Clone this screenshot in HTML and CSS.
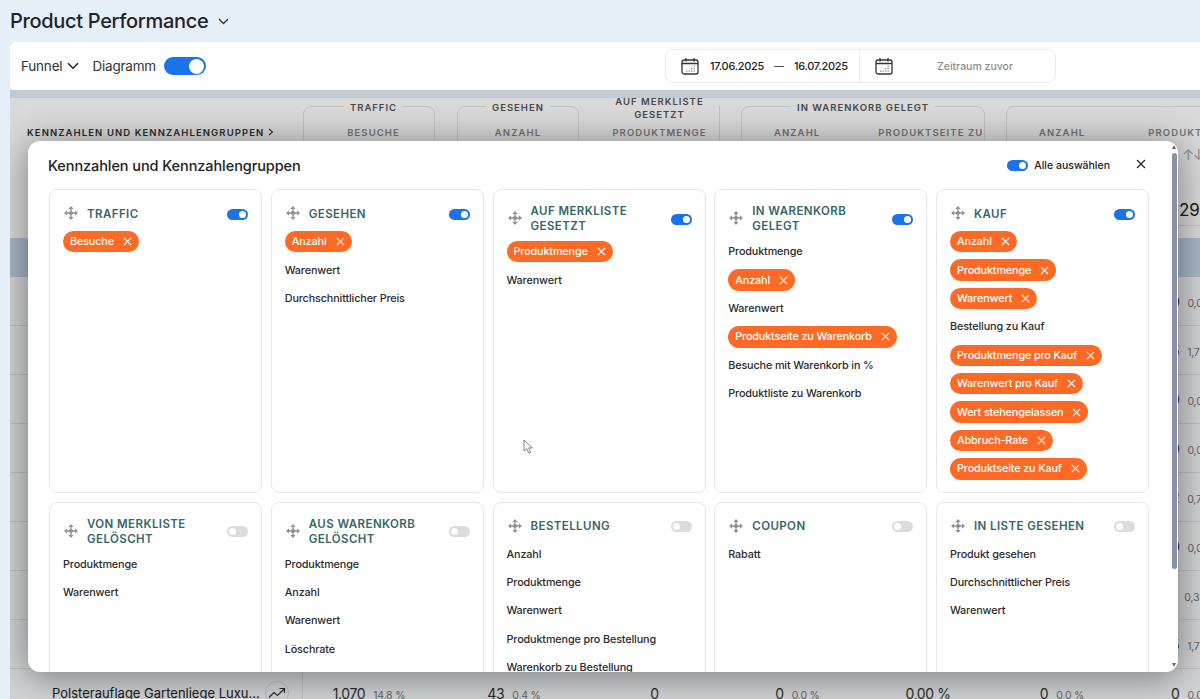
FILE: index.html
```html
<!DOCTYPE html>
<html lang="de">
<head>
  <meta charset="UTF-8">
  <meta name="viewport" content="width=device-width, initial-scale=1.0">
  <title>Product Performance</title>
  <link rel="stylesheet" href="styles.css">
</head>
<body>

  <svg class="icon-defs" width="0" height="0">
    <symbol id="i-move" viewBox="0 0 14 14">
      <path d="M7 2v10M2 7h10" fill="none" stroke="currentColor" stroke-width="1.300"/>
      <path d="M7 0l2.600 3H4.400zM7 14l2.600-3H4.400zM0 7l3-2.600v5.200zM14 7l-3-2.600v5.200z" fill="currentColor"/>
      <circle cx="7" cy="7" r="2" fill="currentColor"/>
    </symbol>
    <symbol id="i-x" viewBox="0 0 10 10">
      <path d="M1 1l8 8M9 1l-8 8" fill="none" stroke="currentColor" stroke-width="1.200"/>
    </symbol>
    <symbol id="i-calendar" viewBox="0 0 18 18">
      <rect x="1" y="3" width="16" height="14" rx="2" fill="none" stroke="currentColor" stroke-width="1.300"/>
      <path d="M1 6.500h16M5 1v3.500M13 1v3.500" fill="none" stroke="currentColor" stroke-width="1.300"/>
      <path d="M5 13.500h1.300v1.300H5zM7.500 13.500h1.300v1.300H7.500zM10 13.500h1.300v1.300H10zM12.500 13.500h1.300v1.300h-1.300zM10 11h1.300v1.300H10zM12.500 11h1.300v1.300h-1.300zM12.500 8.800h1.300v1.300h-1.300z" fill="#8b8b8b"/>
    </symbol>
  </svg>

  <!-- Page title -->
  <header class="page-head">
    <h1>Product Performance</h1>
    <svg class="title-chevron" width="11" height="7" viewBox="0 0 11 7"><path d="M1 1l4.500 4.500L10 1" fill="none" stroke="#333" stroke-width="1.300"/></svg>
  </header>

  <!-- Toolbar -->
  <div class="toolbar">
    <span class="toolbar-label">Funnel</span>
    <svg class="funnel-chevron" width="12" height="8" viewBox="0 0 12 8"><path d="M1 1.300l5 5 5-5" fill="none" stroke="#222" stroke-width="1.500"/></svg>
    <span class="toolbar-label diagram-label">Diagramm</span>
    <span class="toggle toggle-big"></span>

    <div class="date-box">
      <div class="date-part date-current">
        <svg class="calendar" width="18" height="18"><use href="#i-calendar"/></svg>
        <span class="date-value">17.06.2025</span>
        <span class="date-dash">—</span>
        <span class="date-value">16.07.2025</span>
      </div>
      <div class="date-part date-previous">
        <svg class="calendar" width="18" height="18"><use href="#i-calendar"/></svg>
        <span class="date-placeholder">Zeitraum zuvor</span>
      </div>
    </div>
  </div>

  <!-- Report table, dimmed behind the dialog -->
  <main class="report">
    <div class="report-strip"></div>

    <div class="report-head">
      <div class="head-name">KENNZAHLEN UND KENNZAHLENGRUPPEN
        <svg width="6" height="8" viewBox="0 0 6 8"><path d="M1 .8L4.500 4 1 7.200" fill="none" stroke="#333" stroke-width="1.100"/></svg>
      </div>
      <div class="group group-traffic">
        <div class="group-title"><span>TRAFFIC</span></div>
        <div class="group-cols"><span>BESUCHE</span></div>
      </div>
      <div class="group group-seen">
        <div class="group-title"><span>GESEHEN</span></div>
        <div class="group-cols"><span>ANZAHL</span></div>
      </div>
      <div class="group group-wish">
        <div class="group-title">AUF MERKLISTE<br>GESETZT</div>
        <div class="group-cols"><span>PRODUKTMENGE</span></div>
      </div>
      <div class="group group-cart">
        <div class="group-title"><span>IN WARENKORB GELEGT</span></div>
        <div class="group-cols"><span>ANZAHL</span><span>PRODUKTSEITE ZU</span></div>
      </div>
      <div class="group group-buy">
        <div class="group-title">&nbsp;</div>
        <div class="group-cols"><span>ANZAHL</span><span>PRODUKTMENGE</span></div>
      </div>
    </div>

    <div class="report-sort">↑↓</div>
    <div class="report-total">29</div>
    <div class="report-band"></div>

    <div class="report-row"><div class="cell cell-last"><b>0</b><small>0,0 %</small></div></div>
    <div class="report-row"><div class="cell cell-last"><b>5</b><small>1,7 %</small></div></div>
    <div class="report-row"><div class="cell cell-last"><b>0</b><small>0,0 %</small></div></div>
    <div class="report-row"><div class="cell cell-last"><b>0</b><small>0,0 %</small></div></div>
    <div class="report-row"><div class="cell cell-last"><b>2</b><small>0,7 %</small></div></div>
    <div class="report-row"><div class="cell cell-last"><b>0</b><small>0,0 %</small></div></div>
    <div class="report-row"><div class="cell cell-last"><b>1</b><small>0,3 %</small></div></div>
    <div class="report-row"><div class="cell cell-last"><b>5</b><small>1,7 %</small></div></div>
    <div class="report-row">
      <div class="cell-name">
        <span>Polsterauflage Gartenliege Luxu...</span>
        <span class="trend">
          <svg width="18" height="12" viewBox="0 0 18 12"><path d="M1 10.500l5-5 3.500 3L16 2M11.500 1.500H16.500V6" fill="none" stroke="#333" stroke-width="1.200"/></svg>
        </span>
      </div>
      <div class="cell col-traffic"><b>1.070</b><small>14,8 %</small></div>
      <div class="cell col-seen"><b>43</b><small>0,4 %</small></div>
      <div class="cell col-wish"><b>0</b></div>
      <div class="cell col-cart-a"><b>0</b><small>0,0 %</small></div>
      <div class="cell col-cart-b"><b>0,00 %</b></div>
      <div class="cell col-buy"><b>0</b><small>0,0 %</small></div>
      <div class="cell cell-last"><b>0</b><small>0,0 %</small></div>
    </div>

    <div class="report-dim"></div>

    <!-- Dialog -->
    <section class="dialog">
      <div class="dialog-head">
        <h2>Kennzahlen und Kennzahlengruppen</h2>
        <span class="toggle"></span>
        <span class="select-all">Alle auswählen</span>
        <svg class="dialog-close" width="10" height="10"><use href="#i-x"/></svg>
      </div>

      <div class="card-grid">
        <div class="card">
          <div class="card-head">
            <svg class="move" width="14" height="14"><use href="#i-move"/></svg>
            <h3>TRAFFIC</h3>
            <span class="toggle"></span>
          </div>
          <div class="metric-list">
            <span class="chip">Besuche <svg width="9" height="9"><use href="#i-x"/></svg></span>
          </div>
        </div>

        <div class="card">
          <div class="card-head">
            <svg class="move" width="14" height="14"><use href="#i-move"/></svg>
            <h3>GESEHEN</h3>
            <span class="toggle"></span>
          </div>
          <div class="metric-list">
            <span class="chip">Anzahl <svg width="9" height="9"><use href="#i-x"/></svg></span>
            <span class="metric">Warenwert</span>
            <span class="metric">Durchschnittlicher Preis</span>
          </div>
        </div>

        <div class="card">
          <div class="card-head">
            <svg class="move" width="14" height="14"><use href="#i-move"/></svg>
            <h3>AUF MERKLISTE GESETZT</h3>
            <span class="toggle"></span>
          </div>
          <div class="metric-list">
            <span class="chip">Produktmenge <svg width="9" height="9"><use href="#i-x"/></svg></span>
            <span class="metric">Warenwert</span>
          </div>
        </div>

        <div class="card">
          <div class="card-head">
            <svg class="move" width="14" height="14"><use href="#i-move"/></svg>
            <h3>IN WARENKORB GELEGT</h3>
            <span class="toggle"></span>
          </div>
          <div class="metric-list">
            <span class="metric">Produktmenge</span>
            <span class="chip">Anzahl <svg width="9" height="9"><use href="#i-x"/></svg></span>
            <span class="metric">Warenwert</span>
            <span class="chip">Produktseite zu Warenkorb <svg width="9" height="9"><use href="#i-x"/></svg></span>
            <span class="metric">Besuche mit Warenkorb in %</span>
            <span class="metric">Produktliste zu Warenkorb</span>
          </div>
        </div>

        <div class="card">
          <div class="card-head">
            <svg class="move" width="14" height="14"><use href="#i-move"/></svg>
            <h3>KAUF</h3>
            <span class="toggle"></span>
          </div>
          <div class="metric-list">
            <span class="chip">Anzahl <svg width="9" height="9"><use href="#i-x"/></svg></span>
            <span class="chip">Produktmenge <svg width="9" height="9"><use href="#i-x"/></svg></span>
            <span class="chip">Warenwert <svg width="9" height="9"><use href="#i-x"/></svg></span>
            <span class="metric">Bestellung zu Kauf</span>
            <span class="chip">Produktmenge pro Kauf <svg width="9" height="9"><use href="#i-x"/></svg></span>
            <span class="chip">Warenwert pro Kauf <svg width="9" height="9"><use href="#i-x"/></svg></span>
            <span class="chip">Wert stehengelassen <svg width="9" height="9"><use href="#i-x"/></svg></span>
            <span class="chip">Abbruch-Rate <svg width="9" height="9"><use href="#i-x"/></svg></span>
            <span class="chip">Produktseite zu Kauf <svg width="9" height="9"><use href="#i-x"/></svg></span>
          </div>
        </div>

        <div class="card">
          <div class="card-head">
            <svg class="move" width="14" height="14"><use href="#i-move"/></svg>
            <h3>VON MERKLISTE GELÖSCHT</h3>
            <span class="toggle toggle-off"></span>
          </div>
          <div class="metric-list">
            <span class="metric">Produktmenge</span>
            <span class="metric">Warenwert</span>
          </div>
        </div>

        <div class="card">
          <div class="card-head">
            <svg class="move" width="14" height="14"><use href="#i-move"/></svg>
            <h3>AUS WARENKORB GELÖSCHT</h3>
            <span class="toggle toggle-off"></span>
          </div>
          <div class="metric-list">
            <span class="metric">Produktmenge</span>
            <span class="metric">Anzahl</span>
            <span class="metric">Warenwert</span>
            <span class="metric">Löschrate</span>
          </div>
        </div>

        <div class="card">
          <div class="card-head">
            <svg class="move" width="14" height="14"><use href="#i-move"/></svg>
            <h3>BESTELLUNG</h3>
            <span class="toggle toggle-off"></span>
          </div>
          <div class="metric-list">
            <span class="metric">Anzahl</span>
            <span class="metric">Produktmenge</span>
            <span class="metric">Warenwert</span>
            <span class="metric">Produktmenge pro Bestellung</span>
            <span class="metric">Warenkorb zu Bestellung</span>
          </div>
        </div>

        <div class="card">
          <div class="card-head">
            <svg class="move" width="14" height="14"><use href="#i-move"/></svg>
            <h3>COUPON</h3>
            <span class="toggle toggle-off"></span>
          </div>
          <div class="metric-list">
            <span class="metric">Rabatt</span>
          </div>
        </div>

        <div class="card">
          <div class="card-head">
            <svg class="move" width="14" height="14"><use href="#i-move"/></svg>
            <h3>IN LISTE GESEHEN</h3>
            <span class="toggle toggle-off"></span>
          </div>
          <div class="metric-list">
            <span class="metric">Produkt gesehen</span>
            <span class="metric">Durchschnittlicher Preis</span>
            <span class="metric">Warenwert</span>
          </div>
        </div>
      </div>

      <!-- Scrollbar -->
      <div class="scrollbar">
        <span class="scroll-up"></span>
        <span class="scroll-thumb"></span>
        <span class="scroll-down"></span>
      </div>

      <!-- Mouse pointer caught in the shot -->
      <svg class="pointer" width="11" height="15" viewBox="0 0 11 15"><path d="M1 1v11l2.800-2.400L5.800 14l1.800-.8-2-4.300h3.700z" fill="#fff" stroke="#666" stroke-width=".8"/></svg>
    </section>
  </main>

</body>
</html>
```

FILE: styles.css
```css
/* Global styles */
html, body {
  margin: 0;
  height: 699px;
  overflow: hidden;
}

body {
  font-family: Inter, "Noto Sans", sans-serif;
  background-color: #e6eef8;
  color: #222;
}

.icon-defs {
  position: absolute;
}

/* Title */
.page-head {
  display: flex;
  align-items: center;
  height: 42px;
  padding-left: 10px;
}

h1 {
  margin: 0;
  font-size: 20px;
  font-weight: 500;
  letter-spacing: -0.32px;
  color: #1f2328;
}

.title-chevron {
  margin-left: 10px;
}

/* Toolbar */
.toolbar {
  display: flex;
  align-items: center;
  height: 48px;
  margin-left: 10px;
  padding-left: 11px;
  background-color: white;
  border-radius: 6px 0 0 6px;
}

.toolbar-label {
  font-size: 13.500px;
  letter-spacing: -0.2px;
  color: #333;
}

.funnel-chevron {
  margin-left: 5px;
}

.diagram-label {
  margin-left: 13px;
  margin-right: 8px;
}

/* Toggle */
.toggle {
  position: relative;
  flex: none;
  display: block;
  width: 21px;
  height: 11px;
  border-radius: 6px;
  background-color: #1a73e8;
}

.toggle::after {
  content: "";
  position: absolute;
  top: 2px;
  right: 2px;
  width: 7px;
  height: 7px;
  border-radius: 50%;
  background-color: white;
}

.toggle-off {
  background-color: #dcdcdc;
}

.toggle-off::after {
  right: auto;
  left: 2px;
}

.toggle-big {
  width: 42px;
  height: 18px;
  border-radius: 9px;
}

.toggle-big::after {
  top: 1.500px;
  right: 1.500px;
  width: 15px;
  height: 15px;
}

/* Date range */
.date-box {
  display: flex;
  height: 34px;
  margin-left: auto;
  margin-right: 144px;
  border: 1px solid #ebebeb;
  border-radius: 8px;
  box-sizing: border-box;
}

.date-part {
  display: flex;
  align-items: center;
  padding-left: 15px;
}

.date-current {
  width: 178px;
  border-right: 1px solid #ebebeb;
}

.date-previous {
  width: 180px;
}

.calendar {
  color: #333;
}

.date-value {
  font-size: 11px;
  font-weight: 500;
  letter-spacing: -0.3px;
  color: #222;
}

.date-current .calendar {
  margin-right: 11px;
}

.date-dash {
  margin: 0 10px;
  font-size: 10px;
}

.date-placeholder {
  margin-left: 44px;
  font-size: 10.500px;
  font-weight: 500;
  color: #8c8c8c;
}

/* Report behind the dialog */
.report {
  position: relative;
  height: 609px;
  margin-left: 10px;
  overflow: hidden;
}

.report-strip {
  height: 8px;
}

.report-head, .report-row {
  display: grid;
  grid-template-columns: 293px 132px 22px 122px 21px 120px 21px 122px 122px 21px 112px 1fr;
}

.report-head {
  height: 140px;
  background-color: white;
  color: #555;
  overflow: hidden;
}

.head-name {
  padding: 29px 0 0 17px;
  font-size: 9.500px;
  font-weight: 600;
  letter-spacing: 1.100px;
  color: #333;
  white-space: nowrap;
}

.group {
  height: 120px;
  margin-top: 8px;
  border: 1px solid #e4e4e4;
  border-radius: 8px;
  box-sizing: border-box;
}

.group-traffic { grid-column: 2; padding-left: 9px; }
.group-seen { grid-column: 4; }
.group-wish { grid-column: 6; border: none; border-right: 1px solid #e4e4e4; border-radius: 0; }
.group-cart { grid-column: 8 / 10; }
.group-buy { grid-column: 11 / 13; margin-right: -80px; }

.group-title {
  margin-top: -6px;
  font-size: 9.500px;
  font-weight: 600;
  line-height: 13px;
  letter-spacing: 1px;
  text-align: center;
  color: #555;
}

.group-title span {
  padding: 0 6px;
  background-color: white;
}

.group-wish .group-title {
  margin-top: -11.500px;
}

.group-cols {
  display: flex;
  justify-content: center;
  margin-top: 13px;
  font-size: 9.500px;
  font-weight: 600;
  letter-spacing: 1.100px;
  color: #888;
  white-space: nowrap;
}

.group-wish .group-cols {
  margin-top: 6.500px;
}

.group-cart .group-cols, .group-buy .group-cols {
  justify-content: flex-start;
  padding-left: 32px;
  gap: 58px;
}

.group-buy .group-cols {
  gap: 63px;
}

.report-sort {
  position: absolute;
  top: 55px;
  left: 1172px;
  font-size: 15px;
  color: #aaa;
  letter-spacing: -2px;
}

.report-total {
  position: absolute;
  top: 110px;
  left: 1169px;
  font-size: 17px;
  color: #222;
}

.report-band {
  height: 39px;
  background-color: #c6d6e8;
}

.report-row {
  align-items: center;
  height: 48px;
  background-color: #f6f8fb;
  border-bottom: 1px solid #dfe3e8;
}

.cell {
  display: flex;
  align-items: baseline;
  justify-content: center;
  gap: 8px;
}

.cell b {
  font-size: 14px;
  font-weight: 400;
  letter-spacing: -0.4px;
  color: #333;
  white-space: nowrap;
}

.cell small {
  font-size: 10.500px;
  letter-spacing: -0.2px;
  color: #777;
  white-space: nowrap;
}

.cell-name {
  display: flex;
  align-items: center;
  padding-left: 42px;
  height: 100%;
  font-size: 13px;
  color: #222;
  border-right: 1px solid #dfe3e8;
  box-sizing: border-box;
}

.cell-name span:first-child {
  white-space: nowrap;
}

.trend {
  display: flex;
  align-items: center;
  justify-content: center;
  flex: none;
  width: 24px;
  height: 24px;
  margin-left: 5px;
  border: 1px solid #d8dce0;
  border-radius: 50%;
  box-sizing: border-box;
}

.col-traffic { grid-column: 2; }
.col-seen { grid-column: 4; padding-right: 8px; }
.col-wish { grid-column: 6; padding-right: 11px; }
.col-cart-a { grid-column: 8; padding-right: 9px; }
.col-cart-b { grid-column: 9; padding-left: 8px; }
.col-buy { grid-column: 11; }

.cell-last {
  grid-column: 12;
  justify-content: flex-start;
  padding-left: 53px;
  white-space: nowrap;
}

.report-dim {
  position: absolute;
  inset: 0;
  background-color: rgba(0, 0, 0, 0.15);
}

/* Dialog */
.dialog {
  position: absolute;
  top: 51px;
  left: 18px;
  width: 1150px;
  height: 531px;
  padding: 0 29px 0 21px;
  box-sizing: border-box;
  background-color: white;
  border-radius: 12px;
  box-shadow: 0 4px 36px rgba(0, 0, 0, 0.45);
  overflow: hidden;
}

.dialog-head {
  display: flex;
  align-items: center;
  height: 48px;
}

h2 {
  margin: 0 auto 0 -1px;
  font-size: 14.500px;
  font-weight: 500;
  letter-spacing: -0.08px;
  color: #222;
}

.select-all {
  margin-left: 6px;
  font-size: 10.500px;
  font-weight: 500;
  color: #222;
}

.dialog-close {
  margin-left: 26px;
  margin-right: 3px;
  margin-bottom: 3px;
  color: #222;
}

.card-grid {
  display: grid;
  grid-template-columns: repeat(5, 213px);
  gap: 9px 8.750px;
}

.card {
  padding: 14px 13px 12px;
  min-height: 170px;
  background-color: white;
  border: 1px solid #e6e6e6;
  border-radius: 8px;
  box-sizing: border-box;
}

.card-head {
  display: flex;
  align-items: center;
  min-height: 20px;
  margin-bottom: 7px;
}

.move {
  flex: none;
  margin: 0 9px 2px 1px;
  color: #8d9194;
}

h3 {
  margin: 0 auto 0 0;
  padding-right: 8px;
  font-size: 11.500px;
  font-weight: 600;
  line-height: 15px;
  letter-spacing: 0.42px;
  color: #35666a;
}

.metric-list {
  display: flex;
  flex-direction: column;
  align-items: flex-start;
  gap: 7px;
}

.metric, .chip {
  display: inline-flex;
  align-items: center;
  height: 21.400px;
  font-size: 10.800px;
  font-weight: 500;
  letter-spacing: -0.13px;
  white-space: nowrap;
}

.metric {
  color: #2b2b2b;
}

.chip {
  padding: 0 7px 0 7px;
  color: white;
  background-color: #fd6a26;
  border-radius: 11px;
}

.chip svg {
  margin-left: 9px;
}

/* Scrollbar */
.scrollbar {
  position: absolute;
  top: 0;
  right: 0;
  bottom: 0;
  width: 8px;
}

.scroll-thumb {
  position: absolute;
  top: 12px;
  left: 2px;
  width: 5px;
  height: 416px;
  border-radius: 3px;
  background-color: #8a92a4;
}

.scroll-up, .scroll-down {
  position: absolute;
  left: 2px;
  border-left: 2.500px solid transparent;
  border-right: 2.500px solid transparent;
}

.scroll-up {
  top: 4px;
  border-bottom: 4px solid #666;
}

.scroll-down {
  bottom: 5px;
  border-top: 4px solid #666;
}

.pointer {
  position: absolute;
  top: 298px;
  left: 495px;
}
```
